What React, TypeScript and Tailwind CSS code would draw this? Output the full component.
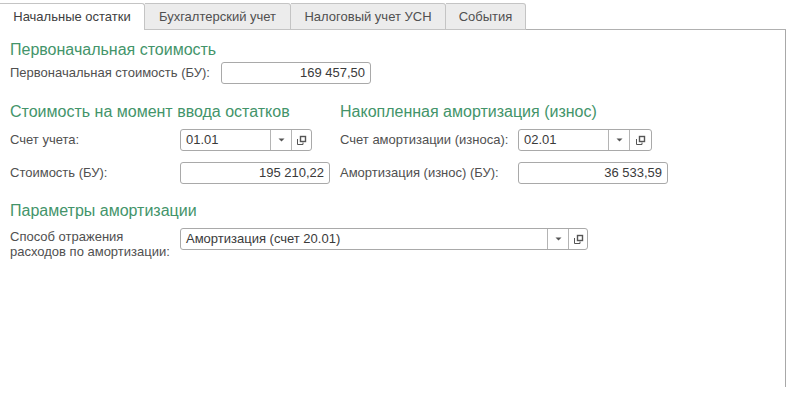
import React from "react";

const DropArrow = () => (
  <svg width="7" height="4" viewBox="0 0 7 4">
    <path d="M0.5 0.5 H6.5 L3.5 3.5 Z" fill="#555" />
  </svg>
);

const OpenIcon = () => (
  <svg width="11" height="11" viewBox="0 0 11 11" fill="none" stroke="#555" strokeWidth="1">
    <rect x="4.5" y="1.5" width="5" height="5" strokeWidth="1.4" />
    <path d="M1.5 4 V9.5 H7 V7.5" />
  </svg>
);

function Combo({ value, width, textW }: { value: string; width: string; textW: string }) {
  return (
    <div className={`${width} h-[22px] flex border border-[#a9a9a9] rounded-[3px] bg-white`}>
      <div className={`${textW} flex items-center pl-[5px] text-[#3a3a3a]`}>{value}</div>
      <div className="w-[21px] border-l border-[#b4b4b4] flex items-center justify-center">
        <DropArrow />
      </div>
      <div className="flex-1 border-l border-[#b4b4b4] flex items-center justify-center">
        <OpenIcon />
      </div>
    </div>
  );
}

function Amount({ value, width }: { value: string; width: string }) {
  return (
    <div className={`${width} h-[22px] flex items-center justify-end pr-[5px] border border-[#a9a9a9] rounded-[3px] bg-white text-[#3a3a3a]`}>
      {value}
    </div>
  );
}

export default function App() {
  return (
    <div className="w-[801px] h-[396px] bg-white font-['Liberation_Sans',Arial,sans-serif] text-[13px] text-[#505050] overflow-hidden">
      <div className="flex h-[30px] pt-[3px] w-[786px]">
        <div className="w-[145px] bg-white border-t border-r border-[#c4c4c4] rounded-tr-[3px] flex items-center justify-center text-[#404040]">
          Начальные остатки
        </div>
        <div className="w-[146px] bg-[#ececec] border-t border-r border-b border-[#c4c4c4] rounded-tr-[3px] flex items-center justify-center">
          Бухгалтерский учет
        </div>
        <div className="w-[155px] bg-[#ececec] border-t border-r border-b border-[#c4c4c4] rounded-tr-[3px] flex items-center justify-center">
          Налоговый учет УСН
        </div>
        <div className="w-[80px] bg-[#ececec] border-t border-r border-b border-[#c4c4c4] rounded-tr-[3px] flex items-center justify-center">
          События
        </div>
        <div className="flex-1 border-b border-[#b0b0b0] mt-[-3px] h-[30px]" />
      </div>
      <div className="w-[786px] h-[357px] border-r border-[#a8a8a8] pl-[10px] pt-[11px]">
        <div className="text-[16px] leading-[18px] text-[#43946a]">Первоначальная стоимость</div>
        <div className="flex items-center mt-[3px] h-[22px]">
          <div className="w-[211px]">Первоначальная стоимость (БУ):</div>
          <Amount value="169 457,50" width="w-[150px]" />
        </div>

        <div className="flex mt-[19px]">
          <div className="w-[330px]">
            <div className="text-[16px] leading-[18px] text-[#43946a]">Стоимость на момент ввода остатков</div>
            <div className="flex items-center mt-[8px] h-[22px]">
              <div className="w-[170px]">Счет учета:</div>
              <Combo value="01.01" width="w-[132px]" textW="w-[89px]" />
            </div>
            <div className="flex items-center mt-[11px] h-[22px]">
              <div className="w-[170px]">Стоимость (БУ):</div>
              <Amount value="195 210,22" width="w-[150px]" />
            </div>
          </div>
          <div>
            <div className="text-[16px] leading-[18px] text-[#43946a]">Накопленная амортизация (износ)</div>
            <div className="flex items-center mt-[8px] h-[22px]">
              <div className="w-[178px]">Счет амортизации (износа):</div>
              <Combo value="02.01" width="w-[134px]" textW="w-[89px]" />
            </div>
            <div className="flex items-center mt-[11px] h-[22px]">
              <div className="w-[178px]">Амортизация (износ) (БУ):</div>
              <Amount value="36 533,59" width="w-[150px]" />
            </div>
          </div>
        </div>

        <div className="text-[16px] leading-[18px] text-[#43946a] mt-[18px]">Параметры амортизации</div>
        <div className="flex items-start mt-[8px]">
          <div className="w-[170px] leading-[15px] mt-[1px]">
            Способ отражения
            <br />
            расходов по амортизации:
          </div>
          <Combo value="Амортизация (счет 20.01)" width="w-[408px]" textW="w-[366px]" />
        </div>
      </div>
    </div>
  );
}
